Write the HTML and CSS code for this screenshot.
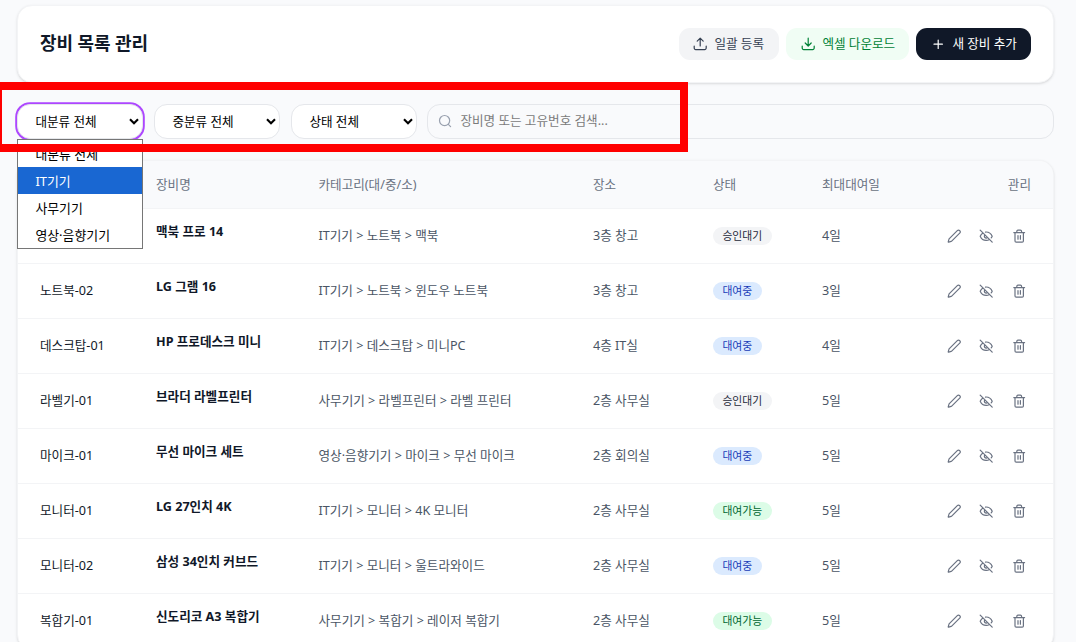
FILE: index.html
```html
<!DOCTYPE html>
<html lang="ko">
<head>
<meta charset="utf-8">
<title>장비 목록 관리</title>
<link rel="stylesheet" href="styles.css">
</head>
<body>
<svg class="defs" aria-hidden="true">
  <symbol id="pencil" viewBox="0 0 24 24"><path d="M21.174 6.812a1 1 0 0 0-3.986-3.987L3.842 16.174a2 2 0 0 0-.5.83l-1.321 4.352a.5.5 0 0 0 .623.622l4.353-1.32a2 2 0 0 0 .83-.497z"/></symbol>
  <symbol id="eyeoff" viewBox="0 0 24 24"><path d="M9.88 9.88a3 3 0 1 0 4.24 4.24M10.73 5.08A10.43 10.43 0 0 1 12 5c7 0 10 7 10 7a13.16 13.16 0 0 1-1.67 2.68M6.61 6.61A13.526 13.526 0 0 0 2 12s3 7 10 7a9.74 9.74 0 0 0 5.39-1.61M2 2l20 20"/></symbol>
  <symbol id="trash" viewBox="0 0 24 24"><path d="M3 6h18M19 6v14a2 2 0 0 1-2 2H7a2 2 0 0 1-2-2V6M8 6V4a2 2 0 0 1 2-2h4a2 2 0 0 1 2 2v2M10 11v6M14 11v6"/></symbol>
  <symbol id="chevron" viewBox="0 0 10 7"><path d="M1 1.2 5 5.2 9 1.2"/></symbol>
</svg>
<main class="page">
  <header class="card header">
    <h1 class="title">장비 목록 관리</h1>
    <div class="actions">
      <button class="btn btn-gray"><svg class="icon" viewBox="0 0 24 24"><path d="M2 15v3.5A2.500 2.500 0 0 0 4.500 21h15a2.500 2.500 0 0 0 2.500-2.500V15M7 7l5-5 5 5M12 2v13"/></svg><span>일괄 등록</span></button>
      <button class="btn btn-green"><svg class="icon" viewBox="0 0 24 24"><path d="M2 15v3.500A2.500 2.500 0 0 0 4.500 21h15a2.500 2.500 0 0 0 2.500-2.500V15M7 10l5 5 5-5M12 15V2"/></svg><span>엑셀 다운로드</span></button>
      <button class="btn btn-dark"><svg class="icon" viewBox="0 0 24 24"><path d="M5 12h14M12 5v14"/></svg><span>새 장비 추가</span></button>
    </div>
  </header>
  <section class="filters">
    <div class="select select-open"><span>대분류 전체</span><svg class="chevron"><use href="#chevron"/></svg>
      <ul class="menu"><li>대분류 전체</li><li class="active">IT기기</li><li>사무기기</li><li>영상·음향기기</li></ul>
    </div>
    <div class="select"><span>중분류 전체</span><svg class="chevron"><use href="#chevron"/></svg></div>
    <div class="select"><span>상태 전체</span><svg class="chevron"><use href="#chevron"/></svg></div>
    <div class="search"><svg class="icon" viewBox="0 0 24 24"><circle cx="11" cy="11" r="8.500"/><path d="m21 21-3.800-3.800"/></svg><span>장비명 또는 고유번호 검색...</span></div>
  </section>
  <section class="card table" id="table">
    <div class="row head"><span></span><span>장비명</span><span>카테고리(대/중/소)</span><span>장소</span><span>상태</span><span>최대대여일</span><span class="right">관리</span></div>
  </section>
  <div class="highlight"></div>
</main>
<script src="app.js"></script>
</body>
</html>
```
FILE: styles.css
```css
* { box-sizing: border-box; }
body {
  margin: 0;
  height: 642px;
  overflow: hidden;
  background: #f9fafc;
  color: #101828;
  font-family: "Noto Sans", "Noto Sans CJK KR", sans-serif;
  font-size: 12.6px;
  line-height: 18px;
}
.defs { position: absolute; width: 0; height: 0; }
.page { position: relative; height: 642px; padding: 5px 22px 0 17px; overflow: hidden; }
.card {
  background: #fff;
  border: 1px solid #f3f4f6;
  border-radius: 15px;
  box-shadow: 0 1px 3px rgba(0, 0, 0, .1), 0 1px 2px -1px rgba(0, 0, 0, .1);
}
.header { display: flex; justify-content: space-between; align-items: center; height: 78px; padding: 0 22px; }
.title { margin: 0 0 2px; font-size: 18px; line-height: 26px; font-weight: 700; letter-spacing: -.1px; }
.actions { display: flex; gap: 7px; }
.btn {
  display: flex;
  align-items: center;
  height: 32px;
  padding: 0 14px;
  gap: 7px;
  border: 0;
  border-radius: 11px;
  font: inherit;
  font-size: 12.6px;
  white-space: nowrap;
}
.btn-gray { width: 100px; background: #f3f4f6; color: #364153; }
.btn-green { width: 123px; padding-left: 15px; background: #f0fdf4; color: #008236; }
.btn-dark { width: 115px; padding-left: 15px; background: #101828; color: #fff; }
.icon { flex: none; width: 14.4px; height: 14.4px; fill: none; stroke: currentColor; stroke-width: 2; stroke-linecap: round; stroke-linejoin: round; }
.filters { display: flex; gap: 10px; margin-top: 21px; height: 35px; }
.select {
  position: relative;
  display: flex;
  justify-content: space-between;
  align-items: center;
  width: 126px;
  padding: 0 3px 0 17.4px;
  border: 1px solid #e5e7eb;
  border-radius: 13px;
  background: #fff;
  color: #000;
}
.select + .select { margin-left: 1px; }
.select-open { border-color: #e5e7eb; box-shadow: 0 0 0 1.8px #ad46ff; }
.chevron { width: 10px; height: 7px; fill: none; stroke: #000; stroke-width: 2.1; }
.menu {
  position: absolute;
  z-index: 2;
  left: -1px;
  top: 34px;
  width: 126px;
  height: 110px;
  margin: 0;
  padding: 0;
  list-style: none;
  background: #fff;
  border: 1px solid #767676;
}
.menu li { height: 27px; padding-left: 17.4px; line-height: 29px; font-size: 12.9px; white-space: nowrap; }
.menu .active { background: #1967d2; color: #fff; }
.search {
  display: flex;
  align-items: center;
  flex: 1;
  gap: 8px;
  padding: 0 10px;
  border: 1px solid #e5e7eb;
  border-radius: 13px;
  color: #7b7b7b;
}
.search span { position: relative; top: -1px; }
.search .icon { color: #99a1af; }
.table { margin-top: 21px; overflow: hidden; }
.row {
  display: grid;
  grid-template-columns: 116px 162.5px 274.5px 120px 109px 120px 1fr;
  align-items: center;
  height: 55px;
  padding: 0 22px;
  border-bottom: 1px solid #f3f4f6;
  white-space: nowrap;
}
.head { height: 48px; background: #f9fafc; color: #6a7282; }
.right { text-align: right; }
.name { font-weight: 700; margin-bottom: 9px; }
.muted { color: #4a5565; }
.badge { justify-self: start; height: 18px; padding: 0 9.4px; border-radius: 9px; font-size: 10.8px; line-height: 18px; }
.wait { background: #f3f4f6; color: #1e2939; }
.rented { background: #dbeafe; color: #193cb8; }
.available { background: #dcfce7; color: #016630; }
.tools { display: flex; justify-content: flex-end; gap: 18px; padding-right: 5px; color: #6a7282; }
.highlight {
  position: absolute;
  z-index: 3;
  left: -6px;
  top: 82px;
  width: 694px;
  height: 70px;
  border: 8px solid #f00;
}
```
FILE: app.js
```js
const items = [
  ["", "맥북 프로 14", "IT기기 > 노트북 > 맥북", "3층 창고", "승인대기", "4일"],
  ["노트북-02", "LG 그램 16", "IT기기 > 노트북 > 윈도우 노트북", "3층 창고", "대여중", "3일"],
  ["데스크탑-01", "HP 프로데스크 미니", "IT기기 > 데스크탑 > 미니PC", "4층 IT실", "대여중", "4일"],
  ["라벨기-01", "브라더 라벨프린터", "사무기기 > 라벨프린터 > 라벨 프린터", "2층 사무실", "승인대기", "5일"],
  ["마이크-01", "무선 마이크 세트", "영상·음향기기 > 마이크 > 무선 마이크", "2층 회의실", "대여중", "5일"],
  ["모니터-01", "LG 27인치 4K", "IT기기 > 모니터 > 4K 모니터", "2층 사무실", "대여가능", "5일"],
  ["모니터-02", "삼성 34인치 커브드", "IT기기 > 모니터 > 울트라와이드", "2층 사무실", "대여중", "5일"],
  ["복합기-01", "신도리코 A3 복합기", "사무기기 > 복합기 > 레이저 복합기", "2층 사무실", "대여가능", "5일"]
];
const tone = { "승인대기": "wait", "대여중": "rented", "대여가능": "available" };
const icon = (id) => `<svg class="icon"><use href="#${id}"/></svg>`;
document.getElementById("table").insertAdjacentHTML("beforeend", items.map(([id, name, category, place, status, days]) =>
  `<div class="row"><span>${id}</span><span class="name">${name}</span><span class="muted">${category.replaceAll(">", "&gt;")}</span><span class="muted">${place}</span><span class="badge ${tone[status]}">${status}</span><span class="muted">${days}</span><span class="tools">${icon("pencil")}${icon("eyeoff")}${icon("trash")}</span></div>`
).join(""));
```
